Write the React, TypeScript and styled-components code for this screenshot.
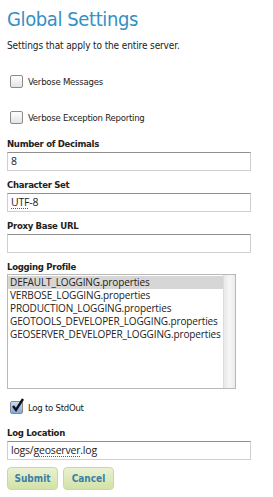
import React from "react";
import styled, { createGlobalStyle } from "styled-components";

const Global = createGlobalStyle`
  html, body { margin: 0; padding: 0; background: #fff; }
  body { font-family: "DejaVu Sans Condensed", "DejaVu Sans", sans-serif; color: #222; }
`;

const Page = styled.div`
  padding: 6px 7px 0 7px;
  width: 273px;
  box-sizing: border-box;
`;

const Title = styled.h1`
  margin: 0;
  font-family: "DejaVu Sans Condensed", "DejaVu Sans", sans-serif;
  font-weight: normal;
  font-size: 20px;
  letter-spacing: -0.4px;
  line-height: 26px;
  color: #3391c5;
`;

const Subtitle = styled.p`
  margin: 7px 0 0 0;
  font-size: 10px;
  letter-spacing: -0.12px;
  line-height: 13px;
`;

const CheckRow = styled.label<{ $mt: number }>`
  display: flex;
  align-items: center;
  gap: 5px;
  margin-top: ${(p) => p.$mt}px;
  padding-left: 3px;
  font-size: 9.5px;
  letter-spacing: -0.25px;
  height: 14px;
`;

const Box = styled.span<{ $checked?: boolean }>`
  width: 11px;
  height: 11px;
  border: 1px solid #8a8a8a;
  border-radius: 2px;
  background: ${(p) =>
    p.$checked ? "linear-gradient(#c8dcf4, #7fa9dc)" : "linear-gradient(#fefefe, #e4e4e4)"};
  position: relative;
  flex: none;
`;

const Tick = styled.svg`
  position: absolute;
  left: 0px;
  top: -4px;
`;

const FieldLabel = styled.div<{ $mt: number }>`
  margin-top: ${(p) => p.$mt}px;
  font-weight: bold;
  font-size: 9.5px;
  letter-spacing: -0.3px;
  line-height: 12px;
`;

const Field = styled.div<{ $mt?: number }>`
  margin-top: ${(p) => p.$mt ?? 2}px;
  width: 244px;
  height: 19px;
  box-sizing: border-box;
  border: 1px solid #cfcfcf;
  border-top-color: #8f8f8f;
  padding: 0 3px;
  font-family: "Open Sans", sans-serif;
  font-size: 10.5px;
  letter-spacing: -0.2px;
  line-height: 17px;
  color: #222;
`;

const Spell = styled.span`
  text-decoration: underline dotted #e02020;
  text-underline-offset: 2px;
`;

const ListBox = styled.div`
  margin-top: 1px;
  width: 229px;
  height: 115px;
  box-sizing: border-box;
  border: 1px solid #b8b8b8;
  display: flex;
  font-family: "Open Sans", sans-serif;
  font-size: 10px;
  letter-spacing: -0.13px;
`;

const Options = styled.div`
  flex: 1;
  padding-top: 1px;
  overflow: hidden;
`;

const Option = styled.div<{ $selected?: boolean }>`
  height: 13px;
  line-height: 13px;
  padding-left: 2px;
  background: ${(p) => (p.$selected ? "#d6d6d6" : "transparent")};
  white-space: nowrap;
`;

const Track = styled.div`
  width: 11px;
  flex: none;
  background: linear-gradient(90deg, #e8e8e8, #f6f6f6 50%, #ececec);
  border-left: 1px solid #dcdcdc;
`;

const Buttons = styled.div`
  display: flex;
  gap: 5px;
  margin-top: 7px;
`;

const Button = styled.button`
  width: 51px;
  height: 23px;
  border: 1px solid #c9d8a2;
  border-radius: 4px;
  background: linear-gradient(#e9f1d2, #d2e2a6);
  color: #3a7fa9;
  font-family: "DejaVu Sans Condensed", "DejaVu Sans", sans-serif;
  font-weight: bold;
  font-size: 10px;
  padding: 0;
`;

const profiles = [
  "DEFAULT_LOGGING.properties",
  "VERBOSE_LOGGING.properties",
  "PRODUCTION_LOGGING.properties",
  "GEOTOOLS_DEVELOPER_LOGGING.properties",
  "GEOSERVER_DEVELOPER_LOGGING.properties",
];

export default function App() {
  return (
    <Page>
      <Global />
      <Title>Global Settings</Title>
      <Subtitle>Settings that apply to the entire server.</Subtitle>
      <CheckRow $mt={22}>
        <Box />
        Verbose Messages
      </CheckRow>
      <CheckRow $mt={22}>
        <Box />
        Verbose Exception Reporting
      </CheckRow>
      <FieldLabel $mt={14}>Number of Decimals</FieldLabel>
      <Field>8</Field>
      <FieldLabel $mt={8}>Character Set</FieldLabel>
      <Field>
        <Spell>UTF</Spell>-8
      </Field>
      <FieldLabel $mt={8}>Proxy Base URL</FieldLabel>
      <Field />
      <FieldLabel $mt={8}>Logging Profile</FieldLabel>
      <ListBox>
        <Options>
          {profiles.map((p, i) => (
            <Option key={p} $selected={i === 0}>
              {p}
            </Option>
          ))}
        </Options>
        <Track />
      </ListBox>
      <CheckRow $mt={11}>
        <Box $checked>
          <Tick width="14" height="15" viewBox="0 0 14 15">
            <path d="M2 8 L5 12 L12 1" stroke="#111" strokeWidth="2.4" fill="none" />
          </Tick>
        </Box>
        Log to StdOut
      </CheckRow>
      <FieldLabel $mt={13}>Log Location</FieldLabel>
      <Field>
        logs/<Spell>geoserver</Spell>.log
      </Field>
      <Buttons>
        <Button>Submit</Button>
        <Button>Cancel</Button>
      </Buttons>
    </Page>
  );
}
